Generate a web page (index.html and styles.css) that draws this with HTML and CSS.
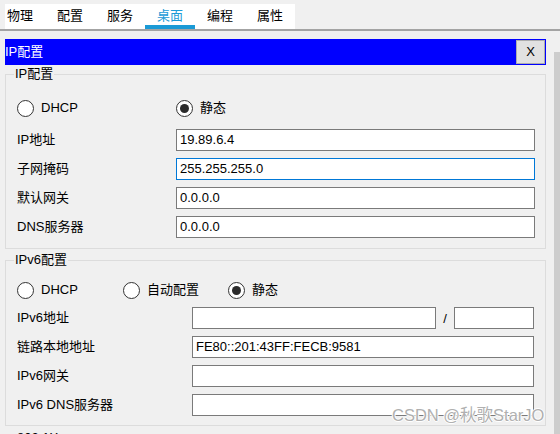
FILE: index.html
```html
<!DOCTYPE html>
<html lang="zh-CN">
<head>
<meta charset="utf-8">
<title>IP配置</title>
<link rel="stylesheet" href="styles.css">
</head>
<body>
<div class="topbar">
  <div class="tabs">
    <div class="tabs-inner">
      <div class="tab">物理</div>
      <div class="tab">配置</div>
      <div class="tab">服务</div>
      <div class="tab active">桌面</div>
      <div class="tab">编程</div>
      <div class="tab">属性</div>
    </div>
  </div>
</div>
<div class="main">
  <div class="content">
    <div class="titlebar">
      <span class="title">IP配置</span>
      <button class="close">X</button>
    </div>

    <div class="group g4">
      <div class="legend">IP配置</div>
      <div class="radios">
        <label class="radio r-dhcp"><span class="dot"></span>DHCP</label>
        <label class="radio"><span class="dot on"></span>静态</label>
      </div>
      <div class="rows">
        <div class="row"><span class="lbl">IP地址</span><div class="field">19.89.6.4</div></div>
        <div class="row"><span class="lbl">子网掩码</span><div class="field focus">255.255.255.0</div></div>
        <div class="row"><span class="lbl">默认网关</span><div class="field">0.0.0.0</div></div>
        <div class="row"><span class="lbl">DNS服务器</span><div class="field">0.0.0.0</div></div>
      </div>
    </div>

    <div class="group g6">
      <div class="legend">IPv6配置</div>
      <div class="radios">
        <label class="radio r6-dhcp"><span class="dot"></span>DHCP</label>
        <label class="radio r6-auto"><span class="dot"></span>自动配置</label>
        <label class="radio"><span class="dot on"></span>静态</label>
      </div>
      <div class="rows">
        <div class="row"><span class="lbl">IPv6地址</span><div class="field addr"></div><span class="slash">/</span><div class="field prefix"></div></div>
        <div class="row"><span class="lbl">链路本地地址</span><div class="field">FE80::201:43FF:FECB:9581</div></div>
        <div class="row"><span class="lbl">IPv6网关</span><div class="field"></div></div>
        <div class="row"><span class="lbl">IPv6 DNS服务器</span><div class="field"></div></div>
      </div>
    </div>

    <div class="next">802.1X</div>
  </div>
  <div class="scrollbar"></div>
</div>
<div class="watermark">CSDN @秋歌StarJO</div>
</body>
</html>
```
FILE: styles.css
```css
html, body {
  margin: 0;
  padding: 0;
  height: 434px;
  overflow: hidden;
}
body {
  background: #f0f0f0;
  font-family: "Liberation Sans", "Noto Sans CJK SC", sans-serif;
  font-size: 13px;
  color: #000;
  position: relative;
}
.topbar {
  height: 29px;
  border-bottom: 2px solid #a3a3a3;
  box-sizing: content-box;
}
.tabs {
  margin-left: 5px;
  position: relative;
  top: 4px;
  width: 290px;
  height: 25px;
  background: #fff;
  overflow: hidden;
}
.tabs-inner {
  display: flex;
  margin-left: -10px;
}
.tab {
  width: 50px;
  height: 25px;
  box-sizing: border-box;
  text-align: center;
  line-height: 24px;
  font-size: 13px;
}
.tab.active {
  color: #1b9bd7;
  border-bottom: 4px solid #1a9ad6;
}
.main {
  display: flex;
}
.content {
  width: 546px;
}
.scrollbar {
  margin-left: 8px;
  margin-top: 21px;
  width: 6px;
  height: 420px;
  background: #cdcdcd;
}
.titlebar {
  margin-top: 8px;
  margin-left: 5px;
  height: 26px;
  background: #0000ff;
  display: flex;
  align-items: center;
  justify-content: space-between;
}
.title {
  color: #fff;
  font-size: 13px;
  line-height: 16px;
}
.close {
  width: 29px;
  height: 24px;
  margin-right: 1px;
  border: 1px solid #adadad;
  background: #e1e1e1;
  font-family: "Liberation Sans", sans-serif;
  font-size: 13px;
  color: #000;
  padding: 0;
  line-height: 20px;
}
.group {
  margin-left: 5px;
  width: 541px;
  box-sizing: border-box;
  border: 1px solid #dcdcdc;
  padding-left: 11px;
}
.g4 {
  margin-top: 9px;
  height: 175px;
  padding-right: 10px;
}
.g6 {
  margin-top: 11px;
  height: 166px;
  padding-right: 11px;
}
.legend {
  margin-top: -9px;
  margin-left: -3px;
  padding: 0 1px;
  width: fit-content;
  line-height: 16px;
  background: #f0f0f0;
}
.radios {
  display: flex;
  align-items: center;
  height: 20px;
}
.g4 .radios { margin-top: 16px; }
.g6 .radios { margin-top: 12px; }
.radio {
  display: flex;
  align-items: center;
  line-height: 16px;
}
.r-dhcp { width: 159px; }
.r6-dhcp { width: 106px; }
.r6-auto { width: 105px; }
.dot {
  width: 15px;
  height: 15px;
  border: 1px solid #333;
  border-radius: 50%;
  background: #fff;
  margin-right: 7px;
  display: flex;
  align-items: center;
  justify-content: center;
}
.dot.on::after {
  content: "";
  width: 9px;
  height: 9px;
  border-radius: 50%;
  background: #2b2b2b;
}
.rows {
  display: flex;
  flex-direction: column;
  gap: 7px;
}
.g4 .rows { margin-top: 11px; }
.g6 .rows { margin-top: 7px; }
.row {
  display: flex;
  align-items: center;
  height: 22px;
}
.lbl {
  flex: none;
  line-height: 16px;
}
.g4 .lbl { width: 159px; }
.g6 .lbl { width: 175px; }
.field {
  flex: 1;
  height: 22px;
  box-sizing: border-box;
  border: 1px solid #7a7a7a;
  background: #fff;
  padding-left: 3px;
  line-height: 20px;
  white-space: nowrap;
}
.field.focus {
  border-color: #0078d7;
}
.field.addr {
  flex: none;
  width: 244px;
}
.slash {
  width: 18px;
  text-align: center;
  flex: none;
}
.field.prefix {
  flex: none;
  width: 80px;
}
.next {
  margin-top: 4px;
  margin-left: 17px;
  line-height: 16px;
}
.watermark {
  position: absolute;
  left: 392px;
  top: 405px;
  font-size: 16.5px;
  line-height: 20px;
  color: #b0b0b0;
  text-shadow: 1px 0 0 #fff, -1px 0 0 #fff, 0 1px 0 #fff, 0 -1px 0 #fff;
  white-space: nowrap;
}
```
